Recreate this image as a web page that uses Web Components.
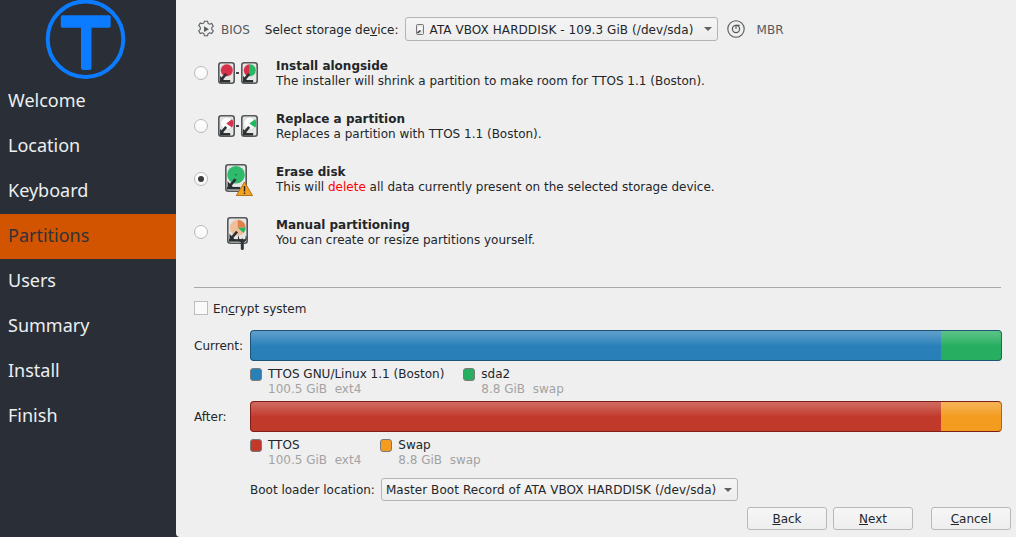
<!DOCTYPE html>
<html><head><meta charset="utf-8"><title>Partitions</title>
<style>
html,body{margin:0;padding:0;width:1016px;height:537px;overflow:hidden;background:#2a2e36}
</style></head>
<body>
<installer-app>
  <install-sidebar slot="side">
    <nav-item>Welcome</nav-item><nav-item>Location</nav-item><nav-item>Keyboard</nav-item>
    <nav-item active>Partitions</nav-item><nav-item>Users</nav-item><nav-item>Summary</nav-item>
    <nav-item>Install</nav-item><nav-item>Finish</nav-item>
  </install-sidebar>
  <partition-page></partition-page>
</installer-app>
<script>
const def=(name,html,setup)=>{
  customElements.define(name,class extends HTMLElement{
    connectedCallback(){
      if(this.shadowRoot)return;
      const r=this.attachShadow({mode:'open'});
      r.innerHTML=typeof html==='function'?html(this):html;
      if(setup)setup(this,r);
    }
  });
};
const hdd=(x,y,w,h,platter)=>`
<g transform="translate(${x} ${y})">
<rect x=".8" y=".8" width="${w-1.6}" height="${h-1.6}" rx="2.5" fill="#e6e6e4" stroke="#54585a" stroke-width="1.600"/>
<circle cx="${w/2+.3}" cy="${h*.38}" r="${w*.37}" fill="#fbfbfb" stroke="#bdbdbd" stroke-width=".5"/>
${platter}
<path d="M${w*.48} ${h*.54}L${w*.24} ${h*.76}" stroke="#2b2f31" stroke-width="2.600" fill="none"/>
<path d="M${w*.12} ${h*.62}L${w*.4} ${h*.86}L${w*.12} ${h*.86}Z" fill="#2b2f31"/>
<rect x="2" y="${h*.82}" width="${w*.6}" height="2.500" fill="#2b2f31"/>
</g>`;
const wedge=c=>`<path d="M8.300 8.400L14 4.300A7 7 0 0 1 14 12.500Z" fill="${c}"/>`;
const icons={
 alongside:`<svg width="40" height="24" viewBox="0 0 40 24">
 ${hdd(0,1,17,22,`<circle cx="8.800" cy="8.300" r="6" fill="#d6304a"/>`)}
 <rect x="18" y="11" width="3" height="2" fill="#444"/>
 ${hdd(23,1,17,22,`<path d="M8.800 2.300a6 6 0 0 0 0 12z" fill="#d6304a"/><path d="M8.800 2.300a6 6 0 0 1 0 12z" fill="#27b866"/>`)}
 </svg>`,
 replace:`<svg width="40" height="24" viewBox="0 0 40 24">
 ${hdd(0,1,17,22,wedge('#d6304a'))}
 <rect x="18" y="11" width="3" height="2" fill="#444"/>
 ${hdd(23,1,17,22,wedge('#22b860'))}
 </svg>`,
 erase:`<svg width="32" height="34" viewBox="0 0 32 34">
 ${hdd(3,2,22,28,`<circle cx="11" cy="10.800" r="8.800" fill="#2ebb6c"/><circle cx="11" cy="10.800" r=".8" fill="#17663a"/>`)}
 <path d="M22.500 20L30.500 33.500H14.300Z" fill="#f5a21c" stroke="#a86a18" stroke-width=".9" stroke-linejoin="round"/>
 <rect x="21.800" y="24" width="1.400" height="5.500" fill="#222"/><rect x="21.800" y="30.500" width="1.400" height="1.500" fill="#222"/>
 </svg>`,
 manual:`<svg width="24" height="36" viewBox="0 0 24 36">
 ${hdd(1,3,21,27,`<circle cx="10.800" cy="10.800" r="7.800" fill="#f0bf98"/><path d="M10.800 10.800L18.600 10.200A7.800 7.800 0 0 1 16.600 16Z" fill="#27b866"/><path d="M10.800 10.800L10.800 3A7.800 7.800 0 0 1 18.600 10.200Z" fill="#e0824c"/>`)}
 <path d="M16.300 26V34.500" stroke="#2f3336" stroke-width="3" stroke-linecap="round"/>
 <path d="M13 21.500a4.200 4.200 0 0 0 1 6.500h4.600a4.200 4.200 0 0 0 1-6.500v3l-2 1.300h-2.600l-2-1.300z" fill="#2f3336"/>
 </svg>`
};

def('installer-app',`<style>
:host{display:flex;width:1016px;height:537px;font:12px "DejaVu Sans",sans-serif;color:#232629}
.main{flex:1;min-width:0;background:#efefef;border-radius:0 0 0 4px}
</style><slot name="side"></slot><div class="main"><slot></slot></div>`);

def('install-sidebar',`<style>
:host{display:flex;flex-direction:column;flex:none;width:176px;height:537px;background:#2a2e36}
svg{display:block;flex:none}
</style>
<svg width="176" height="79" viewBox="0 0 176 79">
<circle cx="85.500" cy="39.200" r="37.800" fill="none" stroke="#0b7bff" stroke-width="4"/>
<path d="M62.500 15.300H109a1.700 1.700 0 0 1 1.700 1.700v9a1.700 1.700 0 0 1-1.700 1.700H91.500V68a2 2 0 0 1-2 2h-6.500a2 2 0 0 1-2-2V27.700H62.500A1.700 1.700 0 0 1 60.800 26v-9a1.700 1.700 0 0 1 1.700-1.700z" fill="#0b7bff"/>
</svg><slot></slot>`);

def('nav-item',`<style>
:host{display:flex;align-items:center;box-sizing:border-box;height:45px;padding:0 0 3px 8px;font:18px "Noto Sans",sans-serif;color:#eceff1}
:host([active]){background:#d35400;color:#30333a}
</style><slot></slot>`);

def('radio-dot',`<style>
:host{display:block;flex:none;width:14px;height:14px;margin-top:19px;box-sizing:border-box;border:1px solid #b8b8b8;border-radius:50%;background:linear-gradient(#fff,#f6f6f6);position:relative}
:host([checked]) i{display:block}
i{display:none;position:absolute;left:3px;top:3px;width:6px;height:6px;border-radius:50%;background:#3a3a3a}
</style><i></i>`);

def('option-row',(h)=>`<style>
:host{display:flex;align-items:flex-start;height:53px}
.ic{flex:none;width:40px;margin:8px 18px 0 10px;height:36px;display:flex;align-items:center;justify-content:center}
.ic svg{display:block}
b{display:block;font:bold 12px/15px "DejaVu Sans",sans-serif}
.d{display:block;font:12px/15px "DejaVu Sans",sans-serif}
.t{margin-top:12px}
</style><radio-dot ${h.hasAttribute('checked')?'checked':''}></radio-dot>
<div class="ic">${icons[h.getAttribute('icon')]}</div>
<div class="t"><b>${h.getAttribute('heading')}</b><span class="d"><slot></slot></span></div>`);

def('combo-box',`<style>
:host{display:inline-flex;align-items:center;box-sizing:border-box;height:24px;border:1px solid #b4b4b4;border-radius:3px;background:linear-gradient(#f5f5f5,#ededed);padding:0 5px 0 4px;color:#232629;font:12px "DejaVu Sans",sans-serif;white-space:nowrap;letter-spacing:.065px}
.c{display:flex;align-items:center;margin-right:8px}
i{margin-left:auto;width:0;height:0;border:4.500px solid transparent;border-top:4.500px solid #606060;border-bottom:0;flex:none}
</style><span class="c"><slot></slot></span><i></i>`);

def('push-button',`<style>
:host{display:flex;align-items:center;justify-content:center;box-sizing:border-box;width:80px;height:23px;border:1px solid #b8b8b8;border-radius:3px;background:linear-gradient(#f6f6f6,#eeeeee);font:12px "DejaVu Sans",sans-serif;color:#232629}
</style><slot></slot>`);

def('usage-bar',(h)=>`<style>
:host{display:flex;box-sizing:border-box;height:31px;flex:1;min-width:0;border-radius:4px;overflow:hidden;position:relative}
.a,.b{height:100%}
.a{width:691px;background:var(--a)}
.b{flex:1;background:var(--b)}
.gloss{position:absolute;inset:0;background:linear-gradient(rgba(255,255,255,.26),rgba(255,255,255,.2) 15%,rgba(255,255,255,0) 52%)}
.edge{position:absolute;inset:0;border:1px solid;border-color:var(--e) var(--f) var(--e) var(--e);border-radius:4px}
</style><div class="a"></div><div class="b"></div><div class="gloss"></div><div class="edge"></div>`);

def('legend-item',(h)=>`<style>
:host{display:grid;grid-template-columns:12px auto;column-gap:6px;font:12px/15px "DejaVu Sans",sans-serif;color:#232629}
i{display:block;box-sizing:border-box;width:12px;height:13px;margin-top:1px;border:1px solid #7a7a7a;border-radius:3px;background:${h.getAttribute('color')}}
span{grid-column:2;color:#a3a3a3;white-space:pre}
</style><i></i><div><slot></slot></div><span>${h.getAttribute('meta')}</span>`);

def('partition-page',`<style>
:host{display:flex;flex-direction:column;box-sizing:border-box;height:537px;padding:17px 5px 0 18px}
.top{display:flex;align-items:center;height:24px;padding-left:3px;color:#232629}
.top svg{display:block;flex:none}
.top>span{padding-top:2px}
.muted{color:#555a5d}
u{text-decoration-thickness:1px;text-underline-offset:1px}
.opts{margin-top:6px}
hr{margin:28px 10px 0 0;height:1px;border:0;background:#a9a9a9;flex:none}
.enc{display:flex;align-items:center;margin-top:13px;height:14px}
.enc i{display:block;width:14px;height:14px;box-sizing:border-box;border:1px solid #bdbdbd;background:#fafafa;margin-right:5px}
.enc span{padding-top:2px}
.bar{display:flex;align-items:center;margin-right:9px;height:31px}
.bar label{width:56px;flex:none}
.legend{display:flex;gap:19px;margin:6px 0 4px 56px;height:30px}
.boot{display:flex;align-items:center;height:23px;margin:6px 0 0 56px}
.boot combo-box{height:23px;margin-left:6px}
.btns{display:flex;justify-content:flex-end;margin-top:6px}
.btns push-button+push-button{margin-left:6px}
.btns push-button:last-child{margin-left:18px}
.devtext{padding-top:2px}
.dev{display:block;flex:none;margin:0 6px}
</style>
<div class="top">
 <svg width="18" height="18" viewBox="0 0 18 18" fill="none" stroke="#5a5e60" stroke-width="1.100"><path d="M7.400 .8h3.200l.5 2.200 1.500.8 2.100-.8 1.600 2.800-1.600 1.500v1.600l1.600 1.500-1.600 2.800-2.100-.8-1.500.8-.5 2.200H7.400l-.5-2.200-1.500-.8-2.100.8-1.600-2.800 1.600-1.500V6.800L1.700 5.300l1.600-2.800 2.100.8 1.500-.8z" transform="translate(0 .4)"/><path d="M7 6.200L12 9.200 7 12z" fill="#5a5e60" stroke="none"/></svg>
 <span class="muted" style="margin-left:6px">BIOS</span>
 <span style="margin-left:15px">Select storage de<u>v</u>ice:</span>
 <combo-box style="margin-left:6px;width:313px">
  <svg class="dev" width="8" height="11" viewBox="0 0 8 11"><rect x=".5" y=".5" width="7" height="10" rx="1" fill="#e4e4e4" stroke="#777"/><circle cx="4" cy="4.500" r="2.300" fill="#fafafa"/><path d="M1.500 9L4.500 6.500" stroke="#333" stroke-width="1.500"/></svg><span class="devtext">ATA VBOX HARDDISK - 109.3 GiB (/dev/sda)</span>
 </combo-box>
 <svg style="margin-left:9px" width="18" height="18" viewBox="0 0 18 18" fill="none" stroke="#55595b"><circle cx="9" cy="9" r="8.200" stroke-width="1.100"/><circle cx="9" cy="9" r="3.600" stroke-width="1.200"/><path d="M9 9V5.400M9 5.400h3.600" stroke-width="1.100"/></svg>
 <span class="muted" style="margin-left:12px">MBR</span>
</div>
<div class="opts">
 <option-row icon="alongside" heading="Install alongside">The installer will shrink a partition to make room for TTOS 1.1 (Boston).</option-row>
 <option-row icon="replace" heading="Replace a partition">Replaces a partition with TTOS 1.1 (Boston).</option-row>
 <option-row icon="erase" checked heading="Erase disk">This will <span style="color:#f00">delete</span> all data currently present on the selected storage device.</option-row>
 <option-row icon="manual" heading="Manual partitioning">You can create or resize partitions yourself.</option-row>
</div>
<hr>
<div class="enc"><i></i><span>En<u>c</u>rypt system</span></div>
<div class="bar" style="margin-top:15px"><label>Current:</label><usage-bar style="--a:#2980b9;--b:#27ae60;--e:#1c5376;--f:#1c6f40"></usage-bar></div>
<div class="legend"><legend-item color="#2980b9" meta="100.5 GiB  ext4">TTOS GNU/Linux 1.1 (Boston)</legend-item><legend-item color="#27ae60" meta="8.8 GiB  swap">sda2</legend-item></div>
<div class="bar"><label>After:</label><usage-bar style="--a:#c0392b;--b:#f39c1f;--e:#7c2017;--f:#a5691a"></usage-bar></div>
<div class="legend"><legend-item color="#c0392b" meta="100.5 GiB  ext4">TTOS</legend-item><legend-item color="#f39c1f" meta="8.8 GiB  swap">Swap</legend-item></div>
<div class="boot"><span>Boot loader location:</span><combo-box>Master Boot Record of ATA VBOX HARDDISK (/dev/sda)</combo-box></div>
<div class="btns"><push-button><span><u>B</u>ack</span></push-button><push-button><span><u>N</u>ext</span></push-button><push-button><span><u>C</u>ancel</span></push-button></div>
`);
</script>
</body></html>
